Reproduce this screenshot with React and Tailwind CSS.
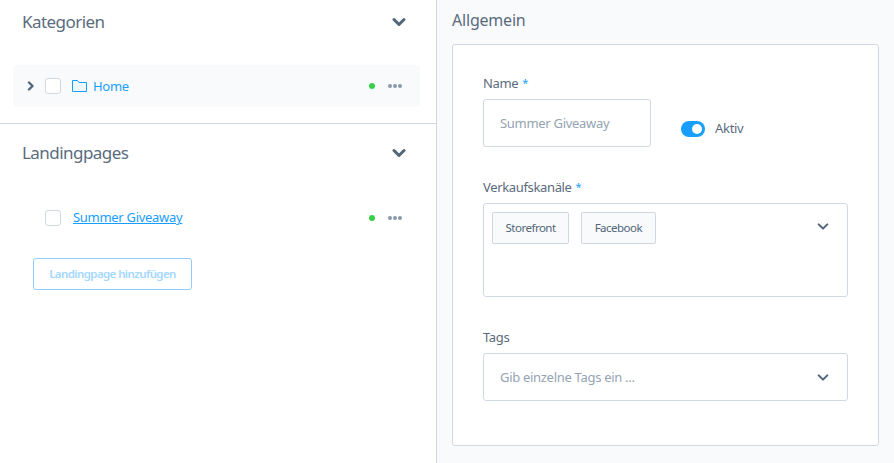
const FONT = "font-['Noto_Sans',sans-serif]";

function Chevron({ className }) {
  return (
    <svg viewBox="0 0 14 10" className={className} fill="none" stroke="currentColor" strokeLinecap="round" strokeLinejoin="round">
      <path d="M2 2.5 7 7.5 12 2.5" />
    </svg>
  );
}

function Checkbox() {
  return <span className="block w-4 h-4 shrink-0 rounded-[3px] border border-[#d1d9e0] bg-white" />;
}

function RowStatus() {
  return (
    <div className="ml-auto flex items-center">
      <span className="w-1.5 h-1.5 rounded-full bg-[#37d046]" />
      <span className="ml-[13px] flex gap-px">
        <i className="w-1 h-1 rounded-full bg-[#8a98a8]" />
        <i className="w-1 h-1 rounded-full bg-[#8a98a8]" />
        <i className="w-1 h-1 rounded-full bg-[#8a98a8]" />
      </span>
    </div>
  );
}

function SectionHead({ title }) {
  return (
    <div className="flex items-center justify-between pl-[22px] pr-[30px] h-6">
      <h2 className="text-[17px] font-normal text-[#5a6b7d] tracking-[-0.55px]">{title}</h2>
      <Chevron className="w-[14px] h-[10px] text-[#52667a] [stroke-width:3]" />
    </div>
  );
}

function Label({ text, required }) {
  return (
    <label className="flex text-[13px] leading-4 text-[#5a6b7d] tracking-[-0.35px]">
      {text}
      {required && <span className="ml-1 text-[#189eff] text-[11px]">*</span>}
    </label>
  );
}

function Chip({ text }) {
  return (
    <span className="h-8 flex items-center px-[12.5px] rounded-[2px] border border-[#d1d9e0] bg-[#f9fafb] text-[11.5px] text-[#52667a] tracking-[-0.5px]">
      {text}
    </span>
  );
}

export default function App() {
  return (
    <div className={`w-[894px] h-[463px] flex overflow-hidden bg-white ${FONT}`}>
      {/* Left tree panel */}
      <div className="w-[437px] shrink-0 border-r border-[#d1d9e0] pt-[10px]">
        <SectionHead title="Kategorien" />
        <div className="mt-[31px] ml-[13px] w-[407px] h-[42px] rounded bg-[#f9fafc] flex items-center pl-[14px] pr-[18px]">
          <svg viewBox="0 0 8 10" className="w-2 h-[10px] text-[#52667a]" fill="none" stroke="currentColor" strokeWidth="2.4" strokeLinecap="round" strokeLinejoin="round">
            <path d="M2 1.5 5.5 5 2 8.5" />
          </svg>
          <span className="ml-[10px]"><Checkbox /></span>
          <svg viewBox="0 0 15 12" className="ml-[11px] w-[15px] h-3 text-[#189eff]" fill="#f0f8ff" stroke="currentColor" strokeWidth="1">
            <path d="M.5 11.5V.5h5l1.5 2h7.5v9z" />
          </svg>
          <a className="ml-[6px] mt-[2px] text-[13px] text-[#189eff] tracking-[-0.3px]">Home</a>
          <RowStatus />
        </div>
        <div className="mt-4 h-px bg-[#d1d9e0]" />
        <div className="mt-[17px]">
          <SectionHead title="Landingpages" />
        </div>
        <div className="mt-[44px] ml-[45px] mr-[34px] h-[18px] flex items-center">
          <Checkbox />
          <a className="ml-3 text-[13px] text-[#189eff] underline tracking-[-0.3px]">Summer Giveaway</a>
          <RowStatus />
        </div>
        <button className="mt-[31px] ml-[33px] w-[159px] h-8 rounded-[3px] border border-[#8dcdff] bg-white text-[11.5px] font-semibold text-[#a3d8ff] tracking-[-0.6px]">
          Landingpage hinzufügen
        </button>
      </div>

      {/* Right form panel */}
      <div className="flex-1 bg-[#f9fafc] pl-[15px] pr-[15px] pt-[9px]">
        <h2 className="h-[22px] text-[16px] leading-[22px] font-normal text-[#5a6b7d] tracking-[-0.2px]">Allgemein</h2>
        <div className="mt-[13px] h-[402px] rounded-[3px] border border-[#d1d9e0] bg-white pl-[30px] pr-[30px] pt-[30px]">
          <Label text="Name" required />
          <div className="mt-2 flex">
            <div className="w-[168px] h-12 rounded-[3px] border border-[#d1d9e0] flex items-center pl-4 pt-[2px] text-[13px] text-[#94a3b3] tracking-[-0.3px]">
              Summer Giveaway
            </div>
            <div className="ml-[30px] mt-[22px] h-4 flex items-center">
              <span className="w-6 h-4 rounded-full bg-[#189eff] flex items-center justify-end pr-[3px]">
                <span className="w-[10px] h-[10px] rounded-full bg-white" />
              </span>
              <span className="ml-[10px] text-[13px] text-[#5a6b7d] tracking-[-0.3px]">Aktiv</span>
            </div>
          </div>
          <div className="mt-[32px]"><Label text="Verkaufskanäle" required /></div>
          <div className="mt-2 w-[365px] h-[94px] rounded-[3px] border border-[#d1d9e0] pl-2 pr-[18px] pt-2 flex items-start">
            <div className="flex gap-3">
              <Chip text="Storefront" />
              <Chip text="Facebook" />
            </div>
            <Chevron className="ml-auto mt-[10px] w-3 h-[9px] text-[#52667a] [stroke-width:2.4]" />
          </div>
          <div className="mt-[32px]"><Label text="Tags" /></div>
          <div className="mt-2 w-[365px] h-12 rounded-[3px] border border-[#d1d9e0] pl-4 pr-[18px] flex items-center justify-between text-[13px] text-[#94a3b3] tracking-[-0.3px]">
            <span className="mt-[2px]">Gib einzelne Tags ein ...</span>
            <Chevron className="w-3 h-[9px] text-[#52667a] [stroke-width:2.4]" />
          </div>
        </div>
      </div>
    </div>
  );
}
